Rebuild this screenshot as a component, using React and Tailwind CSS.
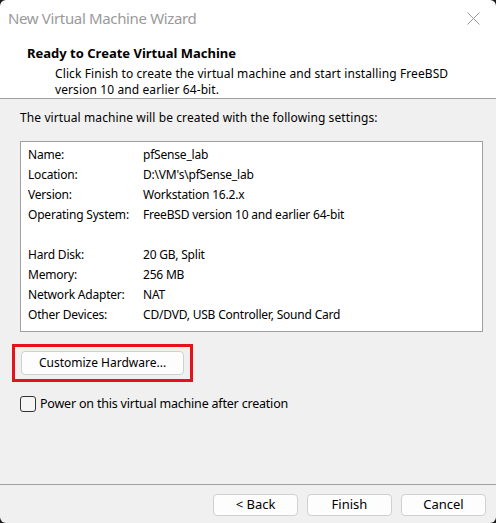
import React from "react";

const rows = [
  ["Name:", "pfSense_lab"],
  ["Location:", "D:\\VM's\\pfSense_lab"],
  ["Version:", "Workstation 16.2.x"],
  ["Operating System:", "FreeBSD version 10 and earlier 64-bit"],
  [null, null],
  ["Hard Disk:", "20 GB, Split"],
  ["Memory:", "256 MB"],
  ["Network Adapter:", "NAT"],
  ["Other Devices:", "CD/DVD, USB Controller, Sound Card"],
];

function Btn({ children, className = "" }) {
  return (
    <div
      className={
        "flex items-center justify-center h-[22px] rounded-[4px] border border-[#d0d0d0] bg-[#fdfdfd] text-black " +
        className
      }
    >
      {children}
    </div>
  );
}

export default function App() {
  return (
    <div
      className="relative w-[496px] h-[523px] bg-[#f0f0f0] overflow-hidden flex flex-col"
      style={{ fontFamily: '"Segoe UI", "Noto Sans", sans-serif' }}
    >
      <div className="absolute inset-0 rounded-[6px] shadow-[0_0_0_8px_#1c1c1c] pointer-events-none z-10" />
      {/* Title bar */}
      <div className="h-[36px] bg-white flex items-center justify-between pl-[8px] pr-[14px]">
        <span className="text-[15px] text-[#9a9a9a] tracking-[-0.35px]">New Virtual Machine Wizard</span>
        <svg width="13" height="13" viewBox="0 0 13 13" className="mr-[2px]">
          <path d="M0.5 0.5 L12.5 12.5 M12.5 0.5 L0.5 12.5" stroke="#9a9a9a" strokeWidth="1" />
        </svg>
      </div>
      {/* Header */}
      <div className="h-[63px] bg-white border-b border-[#a0a0a0] pl-[27px] pt-[9px] text-black">
        <div className="text-[13px] font-bold leading-[16px]">Ready to Create Virtual Machine</div>
        <div className="pl-[28px] pt-[5px] text-[12px] leading-[16px] tracking-[0.1px]">
          Click Finish to create the virtual machine and start installing FreeBSD
          <br />
          version 10 and earlier 64-bit.
        </div>
      </div>
      {/* Body */}
      <div className="flex-1 flex flex-col px-[12px] text-[12px] text-black">
        <div className="pl-[8px] pt-[11px] leading-[16px] tracking-[0.1px]">
          The virtual machine will be created with the following settings:
        </div>
        <div className="ml-[8px] mr-[1px] mt-[15px] h-[191px] bg-white border border-[#a0a0a0] pt-[3px] pl-[7px] tracking-[-0.2px]">
          {rows.map(([k, v], i) => (
            <div key={i} className="flex h-[20px] items-center">
              <span className="w-[115px]">{k}</span>
              <span>{v}</span>
            </div>
          ))}
        </div>
        <div className="mt-[12px] w-[181px] h-[38px] border-[3px] border-[#e8101a] flex items-center justify-center">
          <Btn className="w-[163px] h-[24px] text-[12px]">Customize Hardware...</Btn>
        </div>
        <div className="mt-[13px] pl-[8px] flex items-center gap-[4px]">
          <div className="w-[16px] h-[16px] rounded-[3px] border border-[#333] bg-[#f5f5f5]" />
          <span className="text-[12.5px] tracking-[-0.2px]">Power on this virtual machine after creation</span>
        </div>
      </div>
      {/* Footer */}
      <div className="h-[39px] border-t border-[#a0a0a0] flex justify-end items-start pt-[9px] pr-[10px] gap-[9px]">
        <Btn className="w-[85px] text-[13px]">&lt; Back</Btn>
        <Btn className="w-[85px] text-[13px]">Finish</Btn>
        <Btn className="w-[85px] text-[13px]">Cancel</Btn>
      </div>
    </div>
  );
}
